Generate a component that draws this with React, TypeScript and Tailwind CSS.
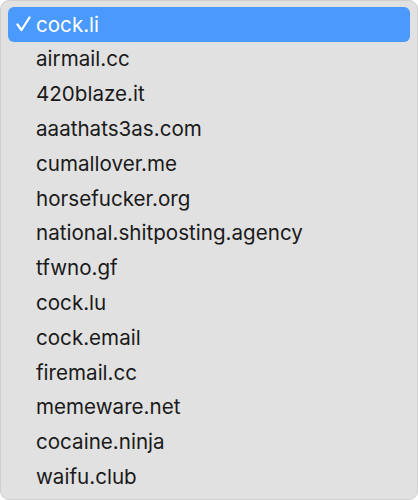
import React from 'react';

const domains = [
  'cock.li',
  'airmail.cc',
  '420blaze.it',
  'aaathats3as.com',
  'cumallover.me',
  'horsefucker.org',
  'national.shitposting.agency',
  'tfwno.gf',
  'cock.lu',
  'cock.email',
  'firemail.cc',
  'memeware.net',
  'cocaine.ninja',
  'waifu.club',
];

function Check() {
  return (
    <svg width="15" height="16" viewBox="0 0 15 16" fill="none">
      <path d="M1.5 8.5 L5.5 14 L13.5 1.5" stroke="white" strokeWidth="2.3" strokeLinecap="round" strokeLinejoin="round" />
    </svg>
  );
}

export default function App() {
  const selected = 'cock.li';
  return (
    <div className="w-[418px] h-[500px] bg-white">
      <div
        className="w-full h-full bg-[#e1e1e1] rounded-[9px] border border-[#d0d0d0] px-[7px] pt-[6px] pb-[6px] text-[20.6px] text-[#1a1a1a]"
        style={{ fontFamily: 'Inter, "Noto Sans", sans-serif' }}
      >
        {domains.map((d) => {
          const active = d === selected;
          return (
            <div
              key={d}
              className={
                active
                  ? 'h-[34.8px] flex items-center rounded-[6px] bg-[#4a9afd] text-white'
                  : 'h-[34.8px] flex items-center'
              }
            >
              <span className="w-[28px] flex justify-start pl-[8px] shrink-0">
                {active && <Check />}
              </span>
              <span className="leading-none pt-[1px]">{d}</span>
            </div>
          );
        })}
      </div>
    </div>
  );
}
